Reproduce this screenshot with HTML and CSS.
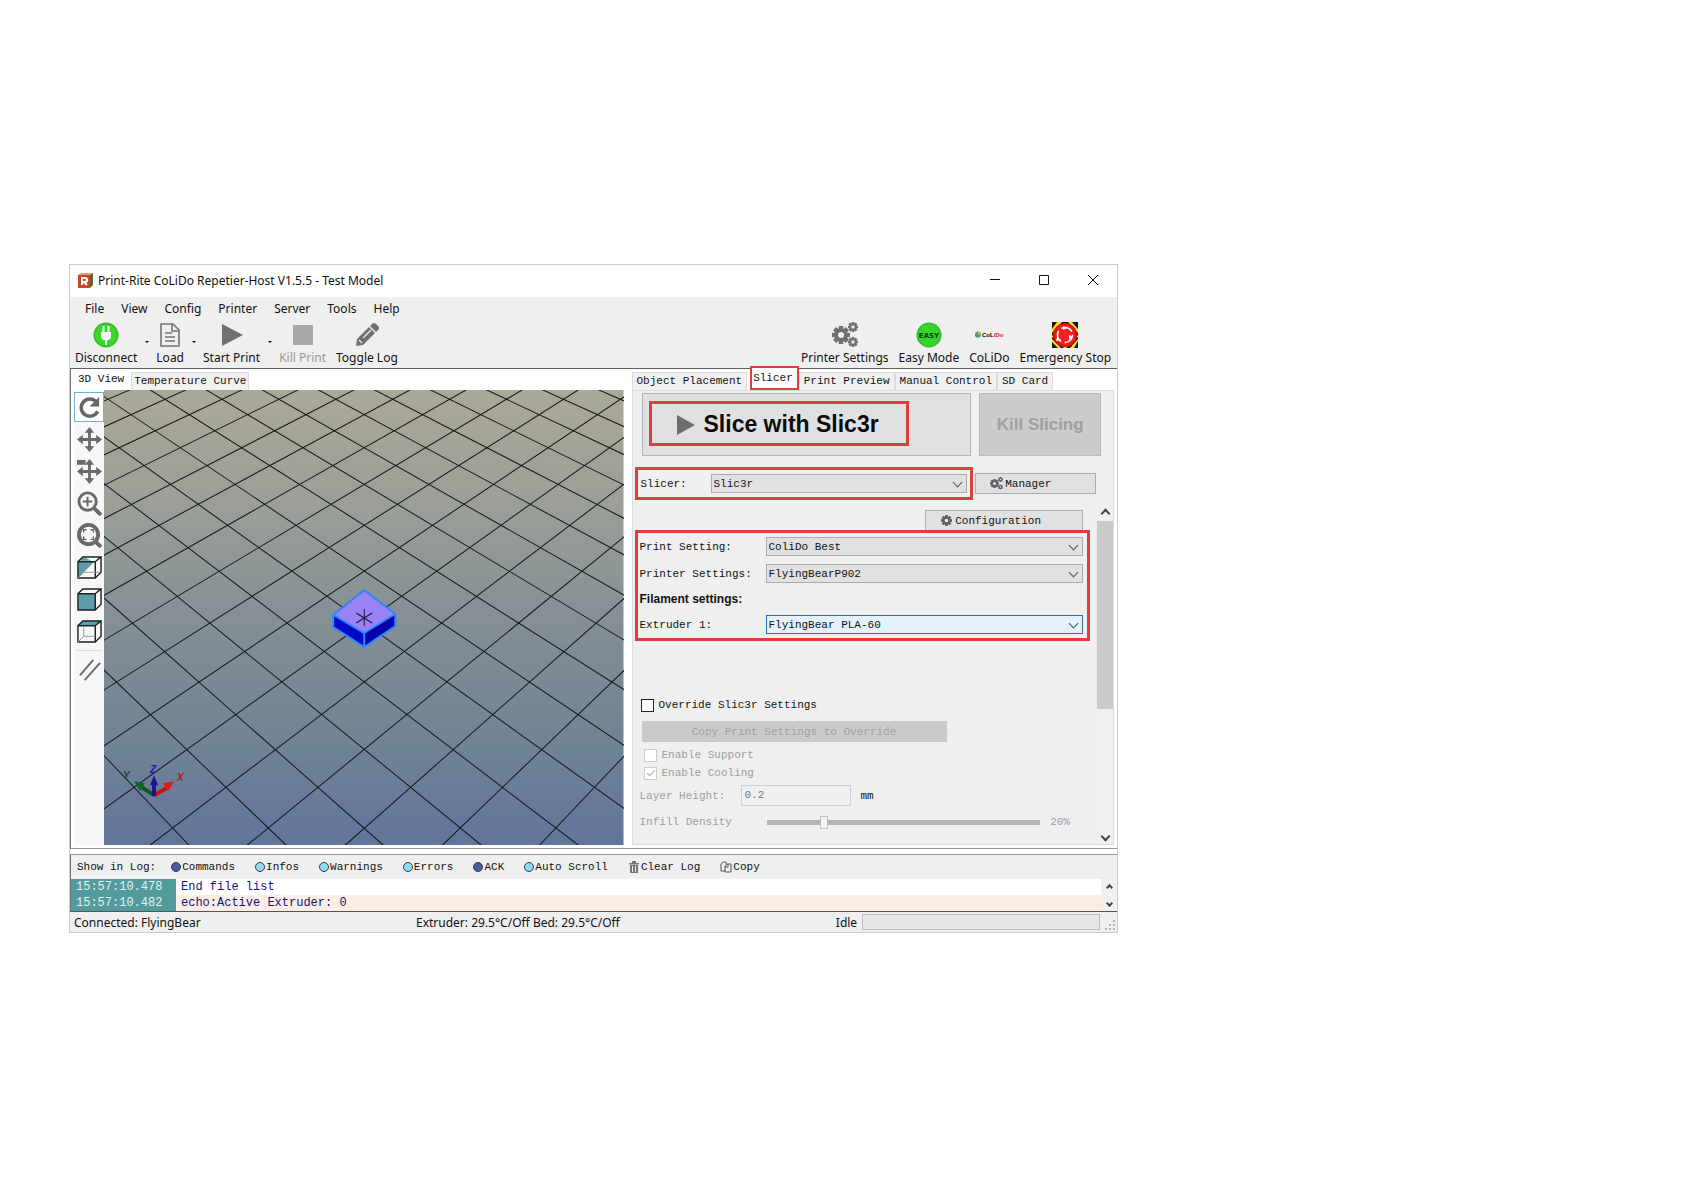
FILE: index.html
```html
<!DOCTYPE html>
<html lang="en">

<head>
    <meta charset="UTF-8">
    <meta name="viewport" content="width=device-width, initial-scale=1.0">
    <title>Print-Rite CoLiDo Repetier-Host V1.5.5 - Test Model</title>
    <link rel="stylesheet" href="styles.css">
</head>

<body>
    <!-- Shared icon shapes -->
    <svg class="defs" aria-hidden="true">
        <symbol id="gear" viewBox="-12 -12 24 24">
            <g fill="currentColor">
                <rect x="-3" y="-12" width="6" height="24" />
                <rect x="-3" y="-12" width="6" height="24" transform="rotate(45)" />
                <rect x="-3" y="-12" width="6" height="24" transform="rotate(90)" />
                <rect x="-3" y="-12" width="6" height="24" transform="rotate(135)" />
            </g>
            <circle r="6.500" fill="#efefef" stroke="currentColor" stroke-width="5" />
        </symbol>
        <symbol id="move" viewBox="0 0 26 26">
            <path d="M13 5v16M5 13h16" fill="none" stroke="currentColor" stroke-width="3" />
            <path d="M13 0l5 6H8zM13 26l5-6H8zM0 13l6-5v10zM26 13l-6-5v10z" fill="currentColor" />
        </symbol>
    </svg>

    <div class="window">
        <header class="titlebar">
            <svg class="app-icon" viewBox="0 0 17 17">
                <path d="M1 3l3-2h12l-3 2z" fill="#d9a070" />
                <path d="M13 3l3-2v12l-3 3z" fill="#6b5a2c" />
                <rect x="1" y="3" width="12" height="13" fill="#c8482a" />
                <path d="M5 13V6h3a2 2 0 0 1 0 4H5M7 10l3 3" fill="none" stroke="#fff" stroke-width="2" />
            </svg>
            <h1>Print-Rite CoLiDo Repetier-Host V1.5.5 - Test Model</h1>
            <div class="window-buttons">
                <button aria-label="Minimize"><svg viewBox="0 0 12 12"><path d="M1 5.5h10" /></svg></button>
                <button aria-label="Maximize"><svg viewBox="0 0 12 12"><path d="M1.5 1.5h9v9h-9z" /></svg></button>
                <button aria-label="Close"><svg viewBox="0 0 12 12"><path d="M1 1l10 10M11 1L1 11" /></svg></button>
            </div>
        </header>

        <nav class="menu">
            <button>File</button>
            <button>View</button>
            <button>Config</button>
            <button>Printer</button>
            <button>Server</button>
            <button>Tools</button>
            <button>Help</button>
        </nav>

        <div class="toolbar">
            <button class="tool">
                <svg viewBox="0 0 26 26">
                    <circle cx="13" cy="13" r="12.5" fill="#2fbf1f" />
                    <circle cx="13" cy="13" r="11" fill="#3bd62a" />
                    <path d="M8 10h10v4a4 4 0 0 1-3 4h-4a4 4 0 0 1-3-4z" fill="#fff" />
                    <path d="M10.500 4v7M15.500 4v7M13 17v6" stroke="#fff" stroke-width="2" />
                </svg>
                Disconnect
            </button>
            <button class="drop" aria-label="Disconnect options"></button>
            <button class="tool">
                <svg viewBox="0 0 26 26">
                    <path d="M4 2h12l6 6v16H4zM15 2v7h7" fill="none" stroke="#737373" stroke-width="1.600" />
                    <path d="M8 11h7M8 15h10M8 19h10" stroke="#737373" stroke-width="1.600" />
                </svg>
                Load
            </button>
            <button class="drop" aria-label="Load options"></button>
            <button class="tool">
                <svg viewBox="0 0 26 26"><path d="M3 2l21 11-21 11z" fill="#707070" /></svg>
                Start Print
            </button>
            <button class="drop" aria-label="Start options"></button>
            <button class="tool kill" disabled>
                <svg viewBox="0 0 26 26"><path d="M3 3h20v20H3z" fill="#a9a9a9" /></svg>
                Kill Print
            </button>
            <button class="tool">
                <svg viewBox="0 0 26 26">
                    <path d="M2 24l1-7L15 5l6 6L9 23z" fill="#707070" />
                    <path d="M16 4l2-2q2-2 4 0l2 2q2 2 0 4l-2 2z" fill="#707070" />
                    <path d="M5 18l3 3M9 16l8-8" stroke="#efefef" stroke-width="1.200" />
                </svg>
                Toggle Log
            </button>
            <button class="tool first-right">
                <svg viewBox="0 0 26 26" color="#707070">
                    <use href="#gear" x="0" y="4" width="18" height="18" />
                    <use href="#gear" x="16" y="0" width="10" height="10" />
                    <use href="#gear" x="16" y="15" width="10" height="10" />
                </svg>
                Printer Settings
            </button>
            <button class="tool">
                <svg viewBox="0 0 26 26">
                    <circle cx="13" cy="13" r="12.500" fill="#2cc223" />
                    <circle cx="13" cy="13" r="11" fill="#35d52b" />
                    <text class="easy-text" x="13" y="16" text-anchor="middle">EASY</text>
                </svg>
                Easy Mode
            </button>
            <button class="tool">
                <svg class="logo" viewBox="0 0 30 26">
                    <circle cx="4" cy="12.500" r="3" fill="#37a3c8" />
                    <path d="M4 9.500a3 3 0 0 1 3 3H4z" fill="#e4b020" />
                    <path d="M1 12.500h3v3a3 3 0 0 1-3-3" fill="#4aa23a" />
                    <text class="logo-text" x="8" y="15">CoL<tspan fill="#d21f26">iDo</tspan></text>
                </svg>
                CoLiDo
            </button>
            <button class="tool">
                <svg viewBox="0 0 26 26">
                    <path d="M0 0h26v26H0z" fill="#f7e21d" />
                    <path d="M0 0h5L0 7zM10 0h4L0 16v-5zM26 0h-6l6 7zM26 11v5L13 0h3zM0 26v-6l6 6zM26 26h-4l4-7zM0 17l9 9h3L0 13zM26 13L14 26h4l8-9z" fill="#1b1408" />
                    <circle cx="13" cy="13" r="12" fill="#e01313" />
                    <circle cx="13" cy="13" r="10" fill="#f22020" />
                    <circle cx="13" cy="13" r="7.500" fill="none" stroke="#fff" stroke-width="1.500" stroke-dasharray="12 3.700" />
                    <path d="M11 4l4 2-4 2zM21 15l-4 3v-5zM5 15l4 3-5 1z" fill="#fff" />
                </svg>
                Emergency Stop
            </button>
        </div>

        <main class="workspace">
            <section class="view-pane">
                <div class="tabs">
                    <button class="tab active">3D View</button>
                    <button class="tab">Temperature Curve</button>
                </div>
                <div class="view-body">
                    <div class="view-tools">
                        <button class="selected" aria-label="Rotate"><svg viewBox="0 0 26 26"><path d="M20 7a9 9 0 1 0 1.500 10" fill="none" stroke="#666" stroke-width="3.600" /><path d="M23 2v10H13z" fill="#666" /></svg></button>
                        <button aria-label="Move view"><svg viewBox="0 0 26 26"><use href="#move" /></svg></button>
                        <button aria-label="Move object"><svg viewBox="0 0 26 26"><use href="#move" /><path d="M0 1h9v5H0z" fill="currentColor" /></svg></button>
                        <button aria-label="Zoom in"><svg viewBox="0 0 26 26"><circle cx="11" cy="11" r="9" fill="none" stroke="currentColor" stroke-width="3" /><path d="M11 6v10M6 11h10" stroke="currentColor" stroke-width="2" /><path d="M17 17l8 8" stroke="currentColor" stroke-width="4" /></svg></button>
                        <button aria-label="Fit view"><svg viewBox="0 0 26 26"><circle cx="12" cy="12" r="10" fill="none" stroke="currentColor" stroke-width="4" /><path d="M7 10V7h3M14 7h3v3M17 14v3h-3M10 17H7v-3" fill="none" stroke="currentColor" stroke-width="1.500" /><path d="M18 18l7 7" stroke="currentColor" stroke-width="4" /></svg></button>
                        <button aria-label="Isometric view"><svg viewBox="0 0 26 26"><path d="M1 24V7h17zM3 6l4-4 8 4z" fill="#5f9caa" /><path d="M1 7h18v17H1zM1 7l5-5h19l-6 5M25 2v16l-6 6" class="cube" /><path d="M7 18h17M7 18l-6 6" class="hidden-edge" /></svg></button>
                        <button aria-label="Front view"><svg viewBox="0 0 26 26"><path d="M1 7h18v17H1z" fill="#5f9caa" /><path d="M1 7h18v17H1zM1 7l5-5h19l-6 5M25 2v16l-6 6" class="cube" /></svg></button>
                        <button aria-label="Top view"><svg viewBox="0 0 26 26"><path d="M1 7l5-5h19l-6 5z" fill="#5f9caa" /><path d="M1 7h18v17H1zM1 7l5-5h19l-6 5M25 2v16l-6 6" class="cube" /><path d="M7 8v10h12M7 18l-6 6" class="hidden-edge" /></svg></button>
                        <hr>
                        <button aria-label="Parallel projection"><svg viewBox="0 0 26 26"><path d="M3 18L17 2M8 23L24 5" fill="none" stroke="currentColor" stroke-width="2" /></svg></button>
                    </div>
                    <svg class="scene" viewBox="0 0 519 455" preserveAspectRatio="xMidYMid slice" role="img" aria-label="Print bed with model">
                        <defs>
                            <linearGradient id="sky" x1="0" y1="0" x2="0" y2="1">
                                <stop offset="0" stop-color="#aba897" />
                                <stop offset=".25" stop-color="#9b9f98" />
                                <stop offset=".5" stop-color="#858f95" />
                                <stop offset=".75" stop-color="#728494" />
                                <stop offset="1" stop-color="#62749a" />
                            </linearGradient>
                            <!-- One family of bed lines, mirrored below for the other -->
                            <path id="bed-lines" d="M494 0L1542 455M438 0L1445 455M382 0L1348 455M326 0L1251 455M270 0L1154 455M214 0L1057 455M158 0L960 455M102 0L862 455M46 0L765 455M-10 0L668 455M-66 0L571 455M-123 0L474 455M-179 0L377 455M-235 0L279 455M-291 0L182 455M-347 0L85 455" />
                        </defs>
                        <rect width="519" height="455" fill="url(#sky)" />
                        <g stroke="#14181d">
                            <use href="#bed-lines" />
                            <use href="#bed-lines" transform="translate(520 0) scale(-1 1)" />
                        </g>
                        <g class="model">
                            <path d="M229 225l31 18v14l-31-20z" fill="#0009c4" />
                            <path d="M291 224l-31 19v14l31-21z" fill="#0004a8" />
                            <path d="M260 200l31 24-31 19-31-18z" fill="#9a83f5" />
                            <path d="M260 200l31 24v12l-31 21-31-20v-12zM229 225l31 18 31-19M260 243v14" fill="none" stroke="#2c86ff" stroke-width="2" stroke-linejoin="round" />
                            <path d="M260 219v17M252 223l16 10M268 223l-16 10" stroke="#1a1440" />
                        </g>
                        <g class="axes">
                            <path d="M50 405l-14-9" stroke="#0b5a20" stroke-width="4" />
                            <path d="M30 391l11 2-5 8z" fill="#0d6a22" />
                            <path d="M50 405l14-8" stroke="#c41414" stroke-width="4" />
                            <path d="M70 391l-11 2 5 8z" fill="#e01818" />
                            <path d="M50 406v-12" stroke="#1a1496" stroke-width="4" />
                            <path d="M50 385l-4 10h8z" fill="#1a1496" />
                            <text x="19" y="389" fill="#14501c">Y</text>
                            <text x="46" y="383" fill="#1717c8">Z</text>
                            <text x="73" y="391" fill="#b01a1a">X</text>
                        </g>
                    </svg>
                </div>
            </section>

            <section class="side-pane">
                <div class="tabs">
                    <button class="tab">Object Placement</button>
                    <button class="tab active marked">Slicer</button>
                    <button class="tab">Print Preview</button>
                    <button class="tab">Manual Control</button>
                    <button class="tab">SD Card</button>
                </div>
                <div class="side-body">
                    <div class="slice-row">
                        <button class="slice-button">
                            <span class="slice-label marked">
                                <svg viewBox="0 0 18 20"><path d="M0 0l18 10L0 20z" fill="#6d6d6d" /></svg>
                                Slice with Slic3r
                            </span>
                        </button>
                        <button class="kill-button" disabled>Kill Slicing</button>
                    </div>

                    <div class="slicer-row">
                        <div class="slicer-field marked">
                            <label for="slicer">Slicer:</label>
                            <span class="select"><select id="slicer"><option>Slic3r</option></select></span>
                        </div>
                        <button class="push">
                            <svg viewBox="0 0 26 26" color="#606060">
                                <use href="#gear" x="0" y="4" width="18" height="18" />
                                <use href="#gear" x="16" y="0" width="10" height="10" />
                                <use href="#gear" x="16" y="15" width="10" height="10" />
                            </svg>Manager
                        </button>
                    </div>

                    <div class="scroll-area">
                        <div class="settings">
                            <button class="push config">
                                <svg viewBox="0 0 24 24" color="#606060"><use href="#gear" /></svg>Configuration
                            </button>
                            <div class="setting-box marked">
                                <label for="print-setting">Print Setting:</label>
                                <span class="select"><select id="print-setting"><option>ColiDo Best</option></select></span>
                                <label for="printer-settings">Printer Settings:</label>
                                <span class="select"><select id="printer-settings"><option>FlyingBearP902</option></select></span>
                                <h2>Filament settings:</h2>
                                <label for="extruder">Extruder 1:</label>
                                <span class="select hot"><select id="extruder"><option>FlyingBear PLA-60</option></select></span>
                            </div>

                            <div class="override">
                                <label class="check"><input type="checkbox">Override Slic3r Settings</label>
                                <button class="copy-settings" disabled>Copy Print Settings to Override</button>
                                <label class="check off"><input type="checkbox" disabled>Enable Support</label>
                                <label class="check off"><input type="checkbox" checked disabled>Enable Cooling</label>
                                <div class="layer">
                                    <label for="layer">Layer Height:</label>
                                    <input id="layer" type="text" value="0.2" disabled>
                                    <span>mm</span>
                                </div>
                                <div class="infill">
                                    <label for="infill">Infill Density</label>
                                    <input id="infill" type="range" min="0" max="100" value="20" disabled>
                                    <span>20%</span>
                                </div>
                            </div>
                        </div>
                        <div class="scrollbar">
                            <button class="arrow up" aria-label="Scroll up"></button>
                            <div class="thumb"></div>
                            <button class="arrow down" aria-label="Scroll down"></button>
                        </div>
                    </div>
                </div>
            </section>
        </main>

        <section class="log">
            <div class="log-bar">
                <span class="log-title">Show in Log:</span>
                <button><i class="dot on"></i>Commands</button>
                <button><i class="dot"></i>Infos</button>
                <button><i class="dot"></i>Warnings</button>
                <button><i class="dot"></i>Errors</button>
                <button><i class="dot on"></i>ACK</button>
                <button><i class="dot"></i>Auto Scroll</button>
                <button><svg viewBox="0 0 12 12"><path d="M2 4h8v8H2zM1 2h10v1.500H1zM4 0h4v2H4z" fill="#777" /><path d="M4.500 5v6M7.500 5v6" stroke="#efefef" /></svg>Clear Log</button>
                <button><svg viewBox="0 0 12 12"><path d="M6 3V1H3L1 3v7h4" fill="none" stroke="#555" /><path d="M5 5l2-2h4v8H5zM5 6h3V3" fill="none" stroke="#555" /></svg>Copy</button>
            </div>
            <div class="log-body">
                <table>
                    <tr>
                        <th>15:57:10.478</th>
                        <td>End file list</td>
                    </tr>
                    <tr>
                        <th>15:57:10.482</th>
                        <td>echo:Active Extruder: 0</td>
                    </tr>
                </table>
                <div class="scrollbar">
                    <button class="arrow up" aria-label="Scroll log up"></button>
                    <button class="arrow down" aria-label="Scroll log down"></button>
                </div>
            </div>
        </section>

        <footer class="status">
            <span>Connected: FlyingBear</span>
            <span>Extruder: 29.5°C/Off Bed: 29.5°C/Off</span>
            <label for="job">Idle</label>
            <progress id="job" value="0" max="100"></progress>
            <svg class="grip" viewBox="0 0 10 10"><path d="M8 0h2v2H8zM4 4h2v2H4zM8 4h2v2H8zM0 8h2v2H0zM4 8h2v2H4zM8 8h2v2H8z" fill="#b5b5b5" /></svg>
        </footer>
    </div>
</body>

</html>
```
FILE: styles.css
```css
* {
    box-sizing: border-box;
}

body {
    margin: 0;
    background: #fff;
    color: #111;
    font-family: "Noto Sans", "Open Sans", sans-serif;
    font-size: 12px;
}

button,
input,
select {
    margin: 0;
    padding: 0;
    border: 0;
    background: none;
    color: inherit;
    font: inherit;
}

button {
    white-space: nowrap;
}

svg {
    display: block;
    flex: none;
}

.defs {
    position: absolute;
    width: 0;
    height: 0;
}

.window {
    width: 62.3%;
    min-width: 1040px;
    margin: 264px 0 0 69px;
    border: 1px solid #c3d0d0;
    background: #efefef;
}

.marked {
    border: 3px solid #d9403e;
}

/* Title bar and menu */
.titlebar {
    display: flex;
    align-items: center;
    height: 32px;
    padding: 0 0 2px 7px;
    background: #fff;
}

.titlebar h1 {
    margin: 0 auto 0 4px;
    font-size: 12px;
    font-weight: normal;
}

.app-icon {
    width: 17px;
    height: 17px;
}

.window-buttons {
    display: flex;
}

.window-buttons button {
    display: flex;
    align-items: center;
    justify-content: center;
    width: 49px;
    height: 30px;
}

.window-buttons svg {
    width: 12px;
    height: 12px;
    fill: none;
    stroke: #111;
}

.menu {
    display: flex;
    gap: 17px;
    height: 24px;
    padding: 0 0 2px 15px;
}

/* Main toolbar */
.toolbar {
    display: flex;
    height: 47px;
    padding: 1px 6px 0 5px;
}

.tool {
    display: flex;
    flex-direction: column;
    align-items: center;
    gap: 2px;
    line-height: 16px;
}

.tool + .tool {
    margin-left: 10px;
}

.tool svg {
    width: 26px;
    height: 26px;
}

.tool .logo {
    width: 30px;
}

.toolbar .first-right {
    margin-left: auto;
}

.kill {
    color: #9a9a9a;
}

.drop {
    display: flex;
    align-items: center;
    justify-content: center;
    width: 19px;
    height: 40px;
}

.drop::after {
    content: "";
    border: 2px solid transparent;
    border-top-color: #111;
    border-bottom: 0;
}

.easy-text {
    font: bold 7px "DejaVu Sans", sans-serif;
    fill: #0c3a0a;
}

.logo-text {
    font: bold 6px "Liberation Sans", sans-serif;
}

/* Two panes */
.workspace {
    display: grid;
    grid-template-columns: 561fr 486fr;
    border-top: 1px solid #5c635c;
    border-left: 1px solid #777;
    border-bottom: 1px solid #999;
    background: #fff;
    font-family: "Liberation Mono", monospace;
    font-size: 11px;
}

.tabs {
    display: flex;
    align-items: flex-end;
    height: 21px;
}

.tab {
    height: 18px;
    padding: 0 4px 1px;
    border: 1px solid #dcdcdc;
    border-bottom: 0;
    background: #f1f1f1;
}

.tab.active {
    height: 20px;
    padding-bottom: 3px;
    border-color: transparent;
    background: #fff;
}

.view-pane {
    display: flex;
    flex-direction: column;
    padding: 0 8px 3px 3px;
}

.view-pane .tab {
    padding: 0 2px 1px;
}

.view-pane .tab.active {
    padding: 0 6px 3px 3px;
}

.view-body {
    display: flex;
    flex: 1;
}

.view-tools {
    display: flex;
    flex-direction: column;
    gap: 2px;
    width: 30px;
    padding-top: 2px;
    background: #f7f7f7;
    color: #6a6a6a;
}

.view-tools button {
    display: flex;
    align-items: center;
    justify-content: center;
    height: 30px;
    border: 1px solid transparent;
}

.view-tools .selected {
    border-color: #6fb2d8;
    background: #fff;
}

.view-tools svg {
    width: 25px;
    height: 25px;
}

.view-tools hr {
    width: 26px;
    margin: 2px;
    border: 0;
    border-top: 1px solid #dcdcdc;
}

.cube {
    fill: none;
    stroke: #1c2426;
    stroke-width: 1.5;
}

.hidden-edge {
    fill: none;
    stroke: #999;
}

.scene {
    flex: 1;
    min-width: 0;
    height: 455px;
}

.axes text {
    font: italic bold 10px "Liberation Sans", sans-serif;
}

/* Slicer pane */
.side-pane {
    display: flex;
    flex-direction: column;
    padding: 0 3px 3px 0;
}

.side-pane .tab.marked {
    height: 24px;
    padding: 0 4px 0 1px;
    margin-left: 3px;
    border: 2px solid #d9403e;
}

.side-body {
    flex: 1;
    display: flex;
    flex-direction: column;
    padding: 2px 0 0 2px;
    border: 1px solid #dcdcdc;
    background: #efefef;
}

.slice-row {
    display: grid;
    grid-template-columns: 330fr 122fr;
    gap: 8px;
    padding: 0 12px 0 7px;
    height: 63px;
}

.slice-button {
    display: flex;
    padding: 7px 6px;
    border: 1px solid #b4b4b4;
    background: #e1e1e1;
}

.slice-label {
    display: flex;
    align-items: center;
    gap: 9px;
    width: 260px;
    height: 45px;
    padding: 2px 0 0 25px;
    color: #0b0b0b;
    font: bold 23px "Liberation Sans", sans-serif;
}

.slice-label svg {
    width: 18px;
    height: 20px;
}

.kill-button {
    border: 1px solid #bdbdbd;
    background: #cbcbcb;
    color: #a0a0a0;
    font: bold 17px "Liberation Sans", sans-serif;
}

.slicer-row {
    display: grid;
    grid-template-columns: 340fr 121fr;
    gap: 2px;
    align-items: center;
    padding: 11px 17px 5px 0;
}

.slicer-field {
    display: grid;
    grid-template-columns: 70px 1fr;
    align-items: center;
    height: 33px;
    padding: 0 3px;
}

.select {
    position: relative;
    display: block;
    height: 19px;
    border: 1px solid #acacac;
    background: #e1e1e1;
}

.select::after {
    content: "";
    position: absolute;
    top: 4px;
    right: 5px;
    width: 6px;
    height: 6px;
    border: solid #555;
    border-width: 0 1px 1px 0;
    transform: rotate(45deg);
    pointer-events: none;
}

.select select {
    width: 100%;
    height: 17px;
    padding-left: 2px;
    appearance: none;
}

.select.hot {
    border-color: #2f6f9c;
    background: #e3f1fb;
}

.push {
    display: flex;
    align-items: center;
    justify-content: center;
    gap: 2px;
    height: 21px;
    padding-right: 30px;
    border: 1px solid #acacac;
    background: #e1e1e1;
}

.push svg {
    width: 13px;
    height: 13px;
}

.scroll-area {
    display: flex;
    flex: 1;
}

.settings {
    flex: 1;
    padding-right: 7px;
}

.config {
    width: 158px;
    height: 20px;
    margin: 5px 7px 0 auto;
    padding-right: 26px;
    gap: 3px;
    border-bottom: 0;
}

.config svg {
    width: 11px;
    height: 11px;
}

.setting-box {
    display: grid;
    grid-template-columns: 126px 1fr;
    row-gap: 8px;
    align-items: center;
    height: 111px;
    padding: 4px 4px 0 2px;
    align-content: start;
}

.setting-box h2 {
    grid-column: 1 / -1;
    height: 16px;
    margin: 0;
    font: bold 12px/16px "Liberation Sans", sans-serif;
}

.override {
    display: flex;
    flex-direction: column;
    align-items: flex-start;
    padding: 55px 8px 8px 5px;
}

.check {
    display: flex;
    align-items: center;
    gap: 5px;
    height: 18px;
}

.check input {
    width: 13px;
    height: 13px;
    margin-left: 1px;
    border: 1px solid #222;
    background: #fff;
    appearance: none;
}

.off,
.layer,
.infill {
    color: #a0a0a0;
}

.check.off input {
    margin-left: 4px;
    border-color: #ccc;
}

.off input:checked::after {
    content: "";
    display: block;
    width: 7px;
    height: 3px;
    margin: 2px;
    border: solid #aaa;
    border-width: 0 0 1px 1px;
    transform: rotate(-45deg);
}

.copy-settings {
    width: 305px;
    height: 21px;
    margin: 7px 0 4px 2px;
    background: #cacaca;
    color: #a0a0a0;
}

.layer {
    display: grid;
    grid-template-columns: 101px 110px auto;
    align-items: center;
    margin-top: 3px;
}

.layer input {
    height: 21px;
    padding: 0 3px 1px;
    border: 1px solid #d0d0d0;
    color: #777;
}

.layer span {
    margin-left: 10px;
    color: #111;
}

.infill {
    display: grid;
    grid-template-columns: 127px 1fr 42px;
    align-items: center;
    align-self: stretch;
    margin-top: 6px;
}

.infill input {
    width: 100%;
    height: 20px;
    appearance: none;
}

.infill input::-webkit-slider-runnable-track {
    height: 5px;
    background: #b5b5b5;
}

.infill input::-webkit-slider-thumb {
    width: 8px;
    height: 13px;
    margin-top: -4px;
    border: 1px solid #c4c4c4;
    background: #f3f3f3;
    appearance: none;
}

.infill span {
    margin-left: 10px;
}

.scrollbar {
    display: flex;
    flex-direction: column;
    width: 16px;
    background: #f0f0f0;
}

.arrow {
    display: flex;
    align-items: center;
    justify-content: center;
    height: 16px;
}

.arrow::after {
    content: "";
    width: 5px;
    height: 5px;
    border: solid #444;
    border-width: 2px 0 0 2px;
    transform: rotate(45deg);
    box-sizing: content-box;
}

.log .arrow::after {
    width: 3px;
    height: 3px;
}

.arrow.down {
    margin-top: auto;
}

.arrow.down::after {
    transform: rotate(225deg);
}

.thumb {
    height: 188px;
    background: #cbcbcb;
}

/* Log */
.log {
    margin-top: 5px;
    border-top: 1px solid #999;
    border-left: 1px solid #777;
    border-bottom: 1px solid #555;
    font-family: "Liberation Mono", monospace;
    font-size: 11px;
    box-shadow: 0 -5px #fff;
}

.log-bar {
    display: flex;
    align-items: center;
    gap: 20px;
    height: 24px;
    padding-left: 6px;
}

.log-title {
    margin-right: -5px;
}

.log-bar button {
    display: flex;
    align-items: center;
    gap: 1px;
}

.log-bar svg {
    width: 12px;
    height: 12px;
}

.dot {
    width: 10px;
    height: 10px;
    border: 1px solid #333c50;
    border-radius: 50%;
    background: #8fdcf2;
}

.dot.on {
    background: #4d5aa0;
}

.log-body {
    display: flex;
    background: #fff;
}

.log table {
    flex: 1;
    border-collapse: collapse;
    font-size: 12px;
    line-height: 15px;
}

.log th {
    width: 105px;
    padding: 0 5px;
    background: #539b9c;
    color: #e2f4f2;
    font-weight: normal;
    text-align: left;
}

.log td {
    padding: 0 5px;
    color: #15157a;
}

.log tr:last-child td {
    background: #faeee5;
}

/* Status bar */
.status {
    display: grid;
    grid-template-columns: 342px 1fr auto 238px 16px;
    align-items: center;
    height: 20px;
    padding: 0 1px 0 4px;
}

.status label {
    margin-right: 5px;
}

.status progress {
    width: 100%;
    height: 16px;
    border: 1px solid #bcbcbc;
    background: #e6e6e6;
    appearance: none;
}

.status progress::-webkit-progress-bar {
    background: #e6e6e6;
}

.grip {
    width: 10px;
    height: 10px;
    align-self: end;
    margin: 0 0 2px 5px;
}
```
